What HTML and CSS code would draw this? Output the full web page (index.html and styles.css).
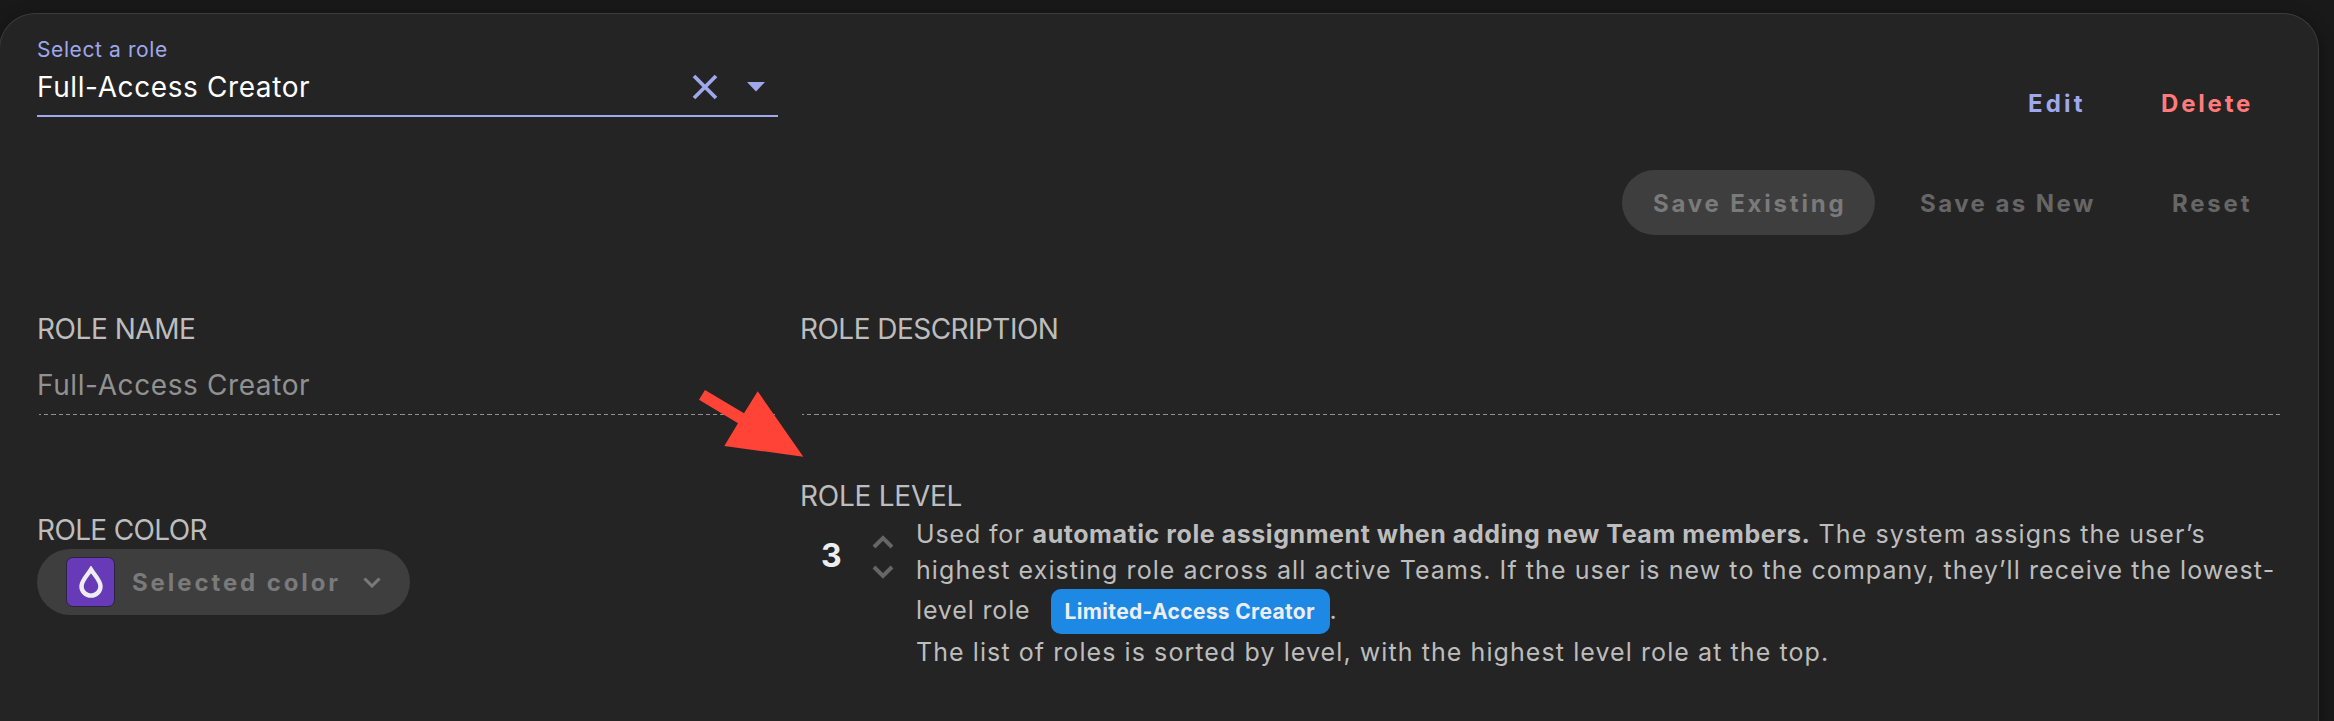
FILE: index.html
```html
<!doctype html>

<html lang="en">
<head>
  <meta charset="utf-8">
  <title>Roles</title>
  <link rel="stylesheet" href="styles.css">
</head>
<body>
	<div class="panel">
		<div class="header">
			<div class="select">
				<label class="select-label">Select a role</label>
				<div class="select-row">
					<span class="select-value">Full-Access Creator</span>
					<svg class="clear" width="26" height="26" viewBox="0 0 26 26"><path d="M2 2L24 24M24 2L2 24"/></svg>
					<svg class="caret" width="18" height="10" viewBox="0 0 18 10"><path d="M0 0H18L9 9.5Z"/></svg>
				</div>
			</div>
			<div class="actions">
				<button class="btn edit">Edit</button>
				<button class="btn delete">Delete</button>
			</div>
		</div>
		<div class="actions save-row">
			<button class="btn filled save" disabled>Save Existing</button>
			<button class="btn save-new" disabled>Save as New</button>
			<button class="btn reset" disabled>Reset</button>
		</div>

		<div class="fields">
			<div class="field">
				<div class="label name">ROLE NAME</div>
				<div class="input">Full-Access Creator</div>
			</div>
			<div class="field">
				<div class="label desc">ROLE DESCRIPTION</div>
				<div class="input"></div>
			</div>
		</div>

		<div class="fields bottom">
			<div class="field-color">
				<div class="label color">ROLE COLOR</div>
				<button class="btn filled picker" disabled>
					<span class="swatch">
						<svg width="24" height="32" viewBox="0 0 24 32"><path d="M12 3.5C8.500 9 2.500 14.500 2.500 20.300a9.500 9.300 0 0 0 19 0C21.500 14.500 15.500 9 12 3.500Z"/></svg>
					</span>
					<span class="picker-text">Selected color</span>
					<svg class="chevron" width="18" height="12" viewBox="0 0 18 12"><path d="M1.500 2.500L9 10L16.500 2.500"/></svg>
				</button>
			</div>
			<div class="field-level">
				<div class="label level">ROLE LEVEL</div>
				<div class="level-row">
					<div class="stepper">
						<span class="num">3</span>
						<div class="arrows">
							<svg width="22" height="14" viewBox="0 0 22 14"><path d="M2 12L11 3L20 12"/></svg>
							<svg width="22" height="14" viewBox="0 0 22 14"><path d="M2 2L11 11L20 2"/></svg>
						</div>
					</div>
					<div class="help">
						<span class="tight">Used for</span> <b>automatic role assignment when adding new Team members.</b> The system assigns the user’s<br>
						highest existing role across all active Teams. If the user is new to the company, they’ll receive the lowest-<br>
						<span class="tight">level role</span> <span class="badge">Limited-Access Creator</span>.<br>
						The list of roles is sorted by level, with the highest level role at the top.
					</div>
				</div>
			</div>
		</div>
	</div>

	<svg class="pointer" width="106" height="68" viewBox="0 0 106 68"><path d="M7 0L46 23.300L59.700 1.300L105.300 66.700L26.300 56L40 33.300L1 9.700Z"/></svg>
</body>
</html>
```
FILE: styles.css
```css
html,body{
	margin:0; padding:0;
	height: 100%;
	overflow: hidden;
	background: #191919;
	font-family: Inter,"Liberation Sans",sans-serif;
}
body{ display: flow-root; position: relative; }
.panel{
	box-sizing: border-box;
	width: 2320px;
	height: 708px;
	margin: 13px 0 0 -1px;
	padding: 0 36px 0 37px;
	background: #242424;
	border: 1px solid #3b3b3b;
	border-bottom: none;
	border-radius: 36px 36px 0 0;
	box-shadow: 0 4px 16px rgba(0,0,0,.45);
}
svg{ display: block; fill: none; }

.header{
	display: flex;
	justify-content: space-between;
	align-items: flex-start;
	height: 122px;
}
.select{
	width: 741px;
	height: 101px;
	border-bottom: 2px solid #9fa8ea;
}
.select-label{
	display: block;
	padding-top: 22px;
	line-height: 27px;
	font-size: 21px;
	letter-spacing: .6px;
	color: #9fa8ea;
}
.select-row{
	display: flex;
	align-items: center;
	height: 47px;
	padding-right: 13px;
}
.select-value{
	flex: 1;
	padding-top: 1px;
	line-height: 36px;
	font-size: 28px;
	letter-spacing: .6px;
	color: #fff;
}
.clear{ stroke: #9fa8ea; stroke-width: 3.8; margin-right: 29px; }
.caret{ fill: #9fa8ea; }

.actions{
	display: flex;
	justify-content: flex-end;
	gap: 14px;
}
.header .actions{ padding-top: 57px; }
.save-row{ margin-top: 34px; }
.btn{
	height: 65px;
	padding: 0 0 0 31px;
	border: none;
	border-radius: 33px;
	background: transparent;
	font-family: inherit;
	font-size: 24px;
	font-weight: bold;
	letter-spacing: 2.8px;
	text-align: left;
	white-space: nowrap;
	color: #666;
}
.filled{ background: #3e3e3e; color: #7a7a7a; }
.save-row .btn{ padding-top: 2px; }
.edit{ width: 119px; color: #9fa8ea; letter-spacing: 3.2px; }
.delete{ width: 152px; color: #ff7a7a; }
.save{ width: 253px; }
.save-new{ width: 238px; letter-spacing: 2.45px; }
.reset{ width: 141px; }

.fields{
	display: grid;
	grid-template-columns: 741px 1fr;
	column-gap: 22px;
	margin-top: 76px;
}
.label{
	line-height: 36px;
	font-size: 28px;
	color: #bdbdbd;
}
.name{ letter-spacing: -.45px; }
.desc{ letter-spacing: -.54px; }
.level{ letter-spacing: -.25px; }
.color{ letter-spacing: -.64px; }
.input{
	height: 36px;
	margin-top: 20px;
	padding-bottom: 11px;
	line-height: 36px;
	font-size: 28px;
	letter-spacing: .6px;
	color: #919191;
}
/* dashed underline of a disabled field */
.field:after{
	content: "";
	display: block;
	height: 1px;
	margin-left: 2px;
	background: repeating-linear-gradient(90deg, #919191 0 2px, transparent 2px 5px, #919191 5px 7.27px);
}

.bottom{ margin-top: 63px; }
.field-color{ padding-top: 34px; }
.picker{
	display: flex;
	align-items: center;
	width: 373px;
	height: 66px;
	margin-top: 1px;
	padding: 0 29px 0 29px;
}
.swatch{
	display: flex;
	align-items: center;
	justify-content: center;
	box-sizing: border-box;
	width: 49px;
	height: 50px;
	border: 1px solid #2c2340;
	border-radius: 7px;
	background: #673ab7;
}
.swatch svg{ stroke: #eee; stroke-width: 4.4; }
.picker-text{ flex: 1; padding-left: 17px; letter-spacing: 2.9px; }
.chevron{ stroke: #7a7a7a; stroke-width: 3; }

.level-row{ display: flex; margin-top: 2px; }
.stepper{
	display: flex;
	width: 116px;
	height: 79px;
	align-items: center;
}
.num{
	width: 51px;
	padding-left: 21px;
	font-size: 32px;
	font-weight: bold;
	color: #eee;
}
.arrows{
	display: flex;
	flex-direction: column;
	gap: 16px;
	padding-top: 2px;
}
.arrows svg{ stroke: #666; stroke-width: 4; }
.help{
	line-height: 36px;
	font-size: 25px;
	letter-spacing: 1.08px;
	white-space: nowrap;
	color: #bdbdbd;
}
.help b{ letter-spacing: .56px; }
.help .tight{ letter-spacing: .85px; }
.badge{
	display: inline-block;
	box-sizing: border-box;
	width: 279px;
	height: 45px;
	margin: 1px 0 0 12px;
	padding-left: 14px;
	border-radius: 10px;
	background: #1e88e5;
	line-height: 45px;
	font-size: 21px;
	font-weight: bold;
	letter-spacing: .33px;
	color: #eee;
}

.pointer{
	position: absolute;
	left: 698px;
	top: 390px;
	fill: #ff4337;
}
```
